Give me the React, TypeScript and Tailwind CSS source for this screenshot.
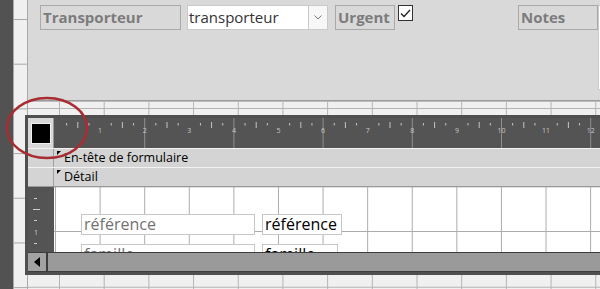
import React from 'react';

const CM = 44.6;
const cms = [0, 1, 2, 3, 4, 5, 6, 7, 8, 9, 10, 11, 12];

const Label = ({ text, className }: { text: string; className?: string }) => (
  <div
    className={`h-[25px] shrink-0 border border-[#a9a9a9] pl-[2px] text-[15px] leading-[23px] font-bold text-[#7c7c7c] ${className ?? ''}`}
  >
    {text}
  </div>
);

// horizontal ruler of the subform (ticks every quarter cm)
const Ruler = () => (
  <svg className="block flex-1" height="30" width="546">
    {cms.map((k) => {
      const x = 1.5 + k * CM;
      return (
        <g key={k}>
          {k > 0 && k % 2 === 0 && <line x1={x} x2={x} y1={0} y2={30} stroke="#8e8e8e" strokeWidth="1" />}
          {k > 0 && (
            <text x={x} y={15} fontSize="7" fill="#c8c8c8" textAnchor="middle" fontFamily="Open Sans, sans-serif">
              {k}
            </text>
          )}
          <line x1={x + CM * 0.25} x2={x + CM * 0.25} y1={5} y2={7.5} stroke="#c4c4c4" />
          <line x1={x + CM * 0.5} x2={x + CM * 0.5} y1={4} y2={10} stroke="#c4c4c4" />
          <line x1={x + CM * 0.75} x2={x + CM * 0.75} y1={5} y2={7.5} stroke="#c4c4c4" />
        </g>
      );
    })}
  </svg>
);

const SideRuler = () => (
  <svg className="block w-[26px] shrink-0 bg-[#545454]" width="26" height="65">
    <line x1="6" x2="9" y1="11.5" y2="11.5" stroke="#cfcfcf" />
    <line x1="5" x2="12" y1="22.5" y2="22.5" stroke="#cfcfcf" />
    <line x1="6" x2="9" y1="33.5" y2="33.5" stroke="#cfcfcf" />
    <text x="6" y="48" fontSize="7" fill="#cfcfcf" fontFamily="Open Sans, sans-serif">1</text>
    <line x1="6" x2="9" y1="56.5" y2="56.5" stroke="#cfcfcf" />
  </svg>
);

const SectionBar = ({ title }: { title: string }) => (
  <div className="flex h-[19px] border-t border-[#f2f2f2] bg-[#d4d4d4]">
    <div className="w-[26px] border-r border-[#a0a0a0]" />
    <div className="relative flex-1 pl-[10px] text-[12.5px] leading-[17px] text-black">
      <span className="absolute left-[3px] top-[2px] h-0 w-0 border-t-[4px] border-r-[4px] border-t-black border-r-transparent" />
      {title}
    </div>
  </div>
);

const Field = ({ text, label, className }: { text: string; label?: boolean; className: string }) => (
  <div
    className={`h-[21px] shrink-0 border border-[#c6c6c6] bg-white pl-[2px] text-[16px] leading-[19px] ${
      label ? 'text-[#727272]' : 'text-black'
    } ${className}`}
  >
    {text}
  </div>
);

const Subform = () => (
  <div className="-ml-[3px] mt-[13px] flex flex-col border-[3px] border-r-0 border-[#4f4f4f] bg-[#4f4f4f]">
    {/* selector + ruler */}
    <div className="flex h-[30px] bg-[#545454]">
      <div className="flex w-[26px] items-center justify-center border-r border-[#9a9a9a] bg-[#d8d8d8]">
        <div className="h-[21px] w-[20px] border border-[#f0f0f0] bg-black" />
      </div>
      <Ruler />
    </div>
    <SectionBar title="En-tête de formulaire" />
    <SectionBar title="Détail" />
    {/* detail section */}
    <div className="flex h-[66px] border-t border-[#9a9a9a]">
      <SideRuler />
      <div className="flex flex-1 flex-col gap-[9px] overflow-hidden bg-white bg-[linear-gradient(to_right,#ababab_1px,transparent_1px),linear-gradient(to_bottom,#ababab_1px,transparent_1px)] bg-[length:44.6px_44.6px] bg-[position:1px_44px] pl-[27px] pt-[27px]">
        <div className="flex gap-[7px]">
          <Field text="référence" label className="w-[174px]" />
          <Field text="référence" className="w-[80px]" />
        </div>
        <div className="flex gap-[7px]">
          <Field text="famille" label className="w-[174px]" />
          <Field text="famille" className="w-[76px]" />
        </div>
      </div>
    </div>
    {/* horizontal scrollbar */}
    <div className="flex h-[20px] border-y border-[#3c3c3c]">
      <div className="flex w-[20px] items-center justify-center border-r-2 border-[#3c3c3c] bg-[#a2a2a2]">
        <div className="h-0 w-0 border-y-[5px] border-r-[6px] border-y-transparent border-r-black" />
      </div>
      <div className="flex-1 bg-[#9a9a9a]" />
    </div>
  </div>
);

export default function App() {
  return (
    <div
      className="relative flex h-[289px] w-[600px] overflow-hidden bg-[#f0f0f0]"
      style={{ fontFamily: '"Open Sans", "Noto Sans", sans-serif' }}
    >
      <div className="w-[13px] shrink-0 bg-[#525252]" />
      {/* vertical ruler of the main form */}
      <div className="w-[15px] shrink-0 border-x border-[#a8a8a8] bg-[#f0f0f0] bg-[linear-gradient(to_bottom,#a8a8a8_1px,transparent_1px)] bg-[length:100%_44.7px] bg-[position:0_19px]" />
      <div className="flex min-w-0 flex-1 flex-col">
        {/* form header */}
        <div className="flex h-[101px] shrink-0 items-start border-b border-[#9c9c9c] bg-[#d9d9d9] pl-[12px] pt-[5px]">
          <Label text="Transporteur" className="w-[141px]" />
          <div className="ml-[6px] flex h-[25px] w-[141px] shrink-0 border border-[#cacaca] bg-white">
            <div className="flex-1 pl-[1px] text-[15px] leading-[22px] text-[#333]">transporteur</div>
            <div className="flex w-[19px] items-center justify-center border-l border-[#cacaca] bg-[#f7f7f7]">
              <svg width="8" height="5" viewBox="0 0 8 5">
                <path d="M0.5 0.5 L4 4 L7.5 0.5" fill="none" stroke="#777" strokeWidth="1" />
              </svg>
            </div>
          </div>
          <Label text="Urgent" className="ml-[7px] w-[60px]" />
          <div className="ml-[3px] flex h-[16px] w-[15px] shrink-0 items-center justify-center border-[1.5px] border-[#333] bg-white">
            <svg width="11" height="9" viewBox="0 0 11 9">
              <path d="M1 4.5 L4 7.5 L10 1" fill="none" stroke="#222" strokeWidth="1.3" />
            </svg>
          </div>
          <Label text="Notes" className="ml-[105px] w-[80px]" />
          <div className="h-[85px] w-[20px] shrink-0 border border-[#cacaca] bg-white" />
        </div>
        {/* design grid of the main form */}
        <div className="flex-1 border-t border-[#bcbcbc] bg-[linear-gradient(to_right,#b4b4b4_1px,transparent_1px),linear-gradient(to_bottom,#b4b4b4_1px,transparent_1px)] bg-[length:44.7px_44.7px] bg-[position:31px_6px]">
          <Subform />
        </div>
      </div>
      {/* red circle */}
      <svg className="pointer-events-none absolute left-0 top-0" width="600" height="289">
        <ellipse cx="47" cy="128" rx="40" ry="30" fill="none" stroke="#a82c32" strokeWidth="2.5" />
      </svg>
    </div>
  );
}
